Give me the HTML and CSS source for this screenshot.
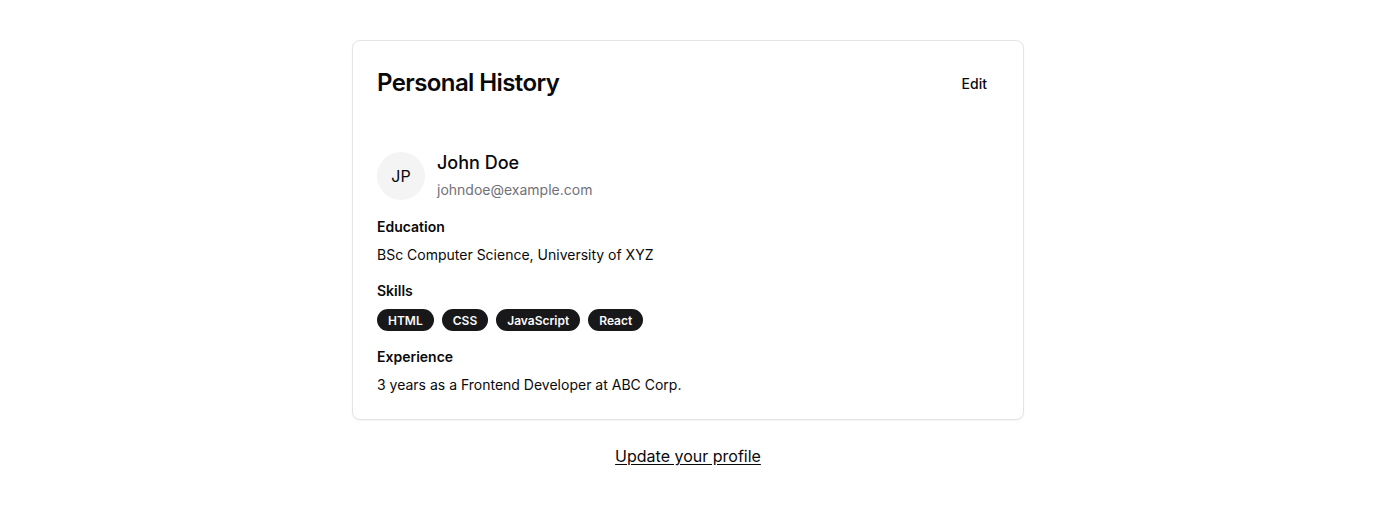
FILE: index.html
```html
<!DOCTYPE html>
<html lang="en">
<head>
<meta charset="utf-8">
<title>Personal History</title>
<link rel="stylesheet" href="styles.css">
</head>
<body>
<main class="page">
  <section class="card">
    <header class="card-header">
      <h1 class="card-title">Personal History</h1>
      <button class="btn-ghost" type="button">Edit</button>
    </header>
    <div class="card-content">
      <div class="profile">
        <div class="avatar">JP</div>
        <div class="profile-text">
          <div class="name">John Doe</div>
          <div class="email">johndoe@example.com</div>
        </div>
      </div>
      <div class="section">
        <h2 class="label">Education</h2>
        <p class="text">BSc Computer Science, University of XYZ</p>
      </div>
      <div class="section">
        <h2 class="label">Skills</h2>
        <div class="badges">
          <span class="badge">HTML</span>
          <span class="badge">CSS</span>
          <span class="badge">JavaScript</span>
          <span class="badge">React</span>
        </div>
      </div>
      <div class="section">
        <h2 class="label">Experience</h2>
        <p class="text">3 years as a Frontend Developer at ABC Corp.</p>
      </div>
    </div>
  </section>
  <a class="update-link" href="#">Update your profile</a>
</main>
</body>
</html>
```

FILE: styles.css
```css
* { box-sizing: border-box; }
html, body { margin: 0; padding: 0; background: #ffffff; }
body {
  font-family: Inter, "Noto Sans", "Liberation Sans", sans-serif;
  color: #09090b;
}
.page {
  display: flex;
  flex-direction: column;
  align-items: center;
  padding-top: 40px;
}
.card {
  width: 672px;
  border: 1px solid #e4e4e7;
  border-radius: 8px;
  background: #fff;
  box-shadow: 0 1px 2px rgba(0,0,0,0.05);
}
.card-header {
  display: flex;
  justify-content: space-between;
  align-items: center;
  padding: 24px;
}
.card-title {
  margin: 0;
  font-size: 24px;
  line-height: 32px;
  font-weight: 600;
  letter-spacing: -0.6px;
}
.btn-ghost {
  height: 36px;
  padding: 0 12px;
  border: none;
  background: transparent;
  border-radius: 6px;
  font-family: inherit;
  font-size: 14px;
  font-weight: 500;
  color: #09090b;
  cursor: pointer;
}
.card-content {
  padding: 26px 24px 24px;
  display: flex;
  flex-direction: column;
  gap: 16px;
}
.profile {
  display: flex;
  align-items: center;
  gap: 12px;
  padding-bottom: 1px;
}
.avatar {
  width: 48px;
  height: 48px;
  border-radius: 50%;
  background: #f4f4f5;
  display: flex;
  align-items: center;
  justify-content: center;
  font-size: 16px;
  color: #09090b;
}
.profile-text { display: flex; flex-direction: column; gap: 5px; }
.name { font-size: 18px; line-height: 24px; font-weight: 500; }
.email { font-size: 14px; line-height: 20px; color: #71717a; }
.section { display: flex; flex-direction: column; gap: 8px; }
.label {
  margin: 0;
  font-size: 14px;
  line-height: 20px;
  font-weight: 600;
}
.text {
  margin: 0;
  font-size: 14px;
  line-height: 20px;
}
.badges { display: flex; gap: 8px; }
.badge {
  display: inline-flex;
  align-items: center;
  height: 22px;
  padding: 0 11px;
  border-radius: 9999px;
  background: #18181b;
  color: #fafafa;
  font-size: 12px;
  font-weight: 600;
}
.update-link {
  margin-top: 24px;
  font-size: 16px;
  line-height: 24px;
  color: #09090b;
  text-decoration: underline;
  text-underline-offset: 2px;
}
```
